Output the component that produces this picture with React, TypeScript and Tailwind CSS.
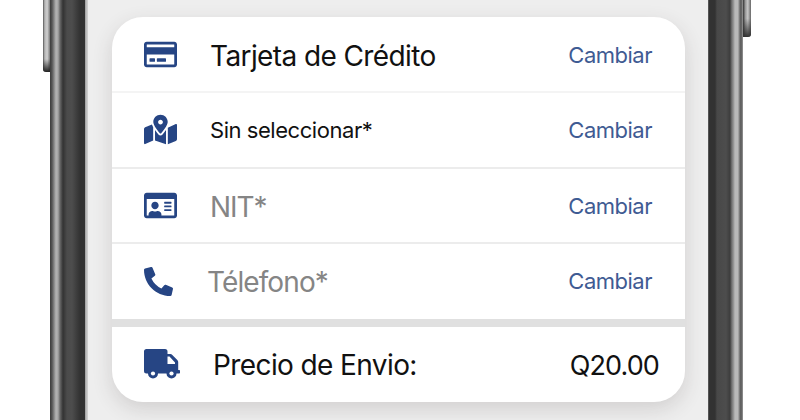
import type { ReactNode } from "react";
import { FaMapMarkedAlt, FaPhoneAlt, FaRegCreditCard, FaRegIdCard } from "react-icons/fa";

interface RowProps {
  icon: ReactNode;
  label: string;
  labelClass: string;
  rowClass: string;
}

const TruckIcon = () => (
  <svg width="36" height="30" viewBox="0 0 36 30" className="shrink-0 text-[#264584]">
    <path
      fill="currentColor"
      fillRule="evenodd"
      d="M2.5 0H21a2.5 2.5 0 0 1 2.5 2.5V5h2.8c.8 0 1.5.3 2 .9l5 5c.6.5.9 1.2.9 2V21h.8c.6 0 1 .4 1 1v1.500c0 .6-.4 1-1 1h-2.500a5 5 0 0 1-10 0h-8.500a5 5 0 0 1-10 0H2.500A2.500 2.500 0 0 1 0 22V2.500A2.500 2.500 0 0 1 2.500 0ZM23.500 7.500v7.500H31v-1.500L25.500 7.500Z"
    />
    <circle cx="9" cy="24.500" r="2.100" fill="white" />
    <circle cx="27.500" cy="24.500" r="2.100" fill="white" />
  </svg>
);

const Row = ({ icon, label, labelClass, rowClass }: RowProps) => (
  <div className={`flex shrink-0 items-center pl-8 pr-[33px] ${rowClass}`}>
    <span className="flex w-[66px] shrink-0 text-[#264584]">{icon}</span>
    <span className={`whitespace-nowrap ${labelClass}`}>{label}</span>
    <button className="ml-auto whitespace-nowrap text-[22px] leading-7 tracking-[-0.5px] text-[#3f5b93]">
      Cambiar
    </button>
  </div>
);

const App = () => {
  return (
    <div className="flex h-[420px] w-[800px] overflow-hidden bg-white pl-[43px] font-['Inter',sans-serif]">
      {/* left side of the phone */}
      <div className="h-[72px] w-[7px] rounded-bl-[3px] bg-[linear-gradient(90deg,#555_0,#b5b5b5_25%,#d0d0d0_60%,#777_100%)]">
        <div className="h-full w-full rounded-bl-[3px] bg-[linear-gradient(180deg,transparent_82%,#222_100%)]" />
      </div>
      <div className="w-[38px] bg-[linear-gradient(90deg,#3c3c3c_0,#555_2px,#b4b4b4_6px,#a5a5a5_8px,#686868_10px,#333_13px,#4b4b4b_17px,#4d4d4d_22px,#3c3c3c_27px,#323232_30px,#323232_35px,#858585_35px,#c8c8c8_36px,#b5b5b5_37px,#e5e5e5_38px)]" />

      <div className="w-[620px] bg-[#eeeeee] pl-6 pt-[17px]">
        <div className="flex h-[385px] w-[573px] flex-col overflow-hidden rounded-[31px] bg-white shadow-[0_7px_20px_rgba(60,50,50,0.16)]">
          <Row
            icon={<FaRegCreditCard size={33} />}
            label="Tarjeta de Crédito"
            labelClass="text-[28px] tracking-[-0.6px] text-[#111] pt-[2px]"
            rowClass="h-[76px] border-b-2 border-[#f4f4f4] pt-px"
          />
          <Row
            icon={<FaMapMarkedAlt size={33} />}
            label="Sin seleccionar*"
            labelClass="text-[22px] tracking-[-0.45px] text-[#111] pt-[2px]"
            rowClass="h-[76px] border-b-2 border-[#ececec] pb-px"
          />
          <Row
            icon={<FaRegIdCard size={33} />}
            label="NIT*"
            labelClass="text-[28px] tracking-[-1.1px] text-[#858585] pt-[2px]"
            rowClass="h-[75px] border-b-2 border-[#ececec]"
          />
          <Row
            icon={<FaPhoneAlt size={29} />}
            label="Télefono*"
            labelClass="text-[28px] tracking-[-0.9px] text-[#858585] -ml-[3px] pt-[2px]"
            rowClass="h-[75px] pb-px"
          />
          <div className="h-2 shrink-0 bg-[#e0e0e0]" />
          <div className="flex flex-1 items-center pl-8 pr-[26px] pb-0.5">
            <TruckIcon />
            <span className="ml-[33px] whitespace-nowrap pt-[3px] text-[28px] tracking-[-0.6px] text-[#111]">
              Precio de Envio:
            </span>
            <span className="ml-auto pt-[5px] text-[27px] tracking-[-0.9px] text-[#111]">Q20.00</span>
          </div>
        </div>
      </div>

      {/* right side of the phone */}
      <div className="w-[35px] bg-[linear-gradient(90deg,#777_0,#323232_1px,#323232_7px,#484848_9px,#4d4d4d_18px,#3d3d3d_22px,#777_24px,#888_25px,#b8b8b8_27px,#b8b8b8_30px,#888_31px,#555_33px,#999_35px)]" />
      <div className="h-[37px] w-[8px] rounded-br-[3px] bg-[linear-gradient(90deg,#333_0,#999_30%,#c8c8c8_60%,#666_100%)]">
        <div className="h-full w-full rounded-br-[3px] bg-[linear-gradient(180deg,transparent_50%,#333_100%)]" />
      </div>
    </div>
  );
};

export default App;
